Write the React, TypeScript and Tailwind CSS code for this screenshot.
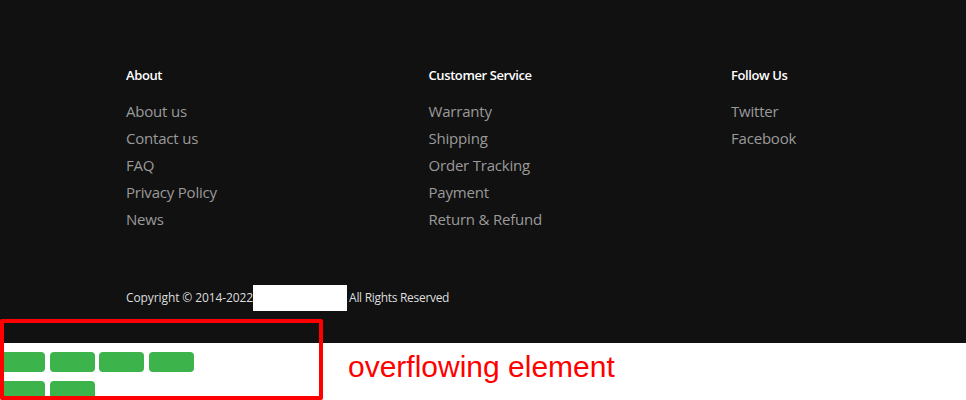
import React from "react";

const cols = [
  { title: "About", links: ["About us", "Contact us", "FAQ", "Privacy Policy", "News"] },
  { title: "Customer Service", links: ["Warranty", "Shipping", "Order Tracking", "Payment", "Return & Refund"] },
  { title: "Follow Us", links: ["Twitter", "Facebook"] },
];

export default function App() {
  return (
    <div className="relative w-[966px] h-[400px] overflow-hidden bg-white">
      <footer
        className="h-[343px] bg-[#111111] pl-[126px] pt-[65px]"
        style={{ fontFamily: '"Open Sans", "Noto Sans", sans-serif' }}
      >
        <div className="flex">
          {cols.map((c) => (
            <div key={c.title} className="w-[302.5px] shrink-0">
              <h4 className="text-[13px] leading-[20px] font-semibold tracking-[-0.4px] text-white">{c.title}</h4>
              <ul className="mt-[13px]">
                {c.links.map((l) => (
                  <li key={l} className="text-[15px] leading-[27px] tracking-[-0.2px] text-[#9a9a9a]">
                    {l}
                  </li>
                ))}
              </ul>
            </div>
          ))}
        </div>
        <div className="mt-[52px] flex items-center text-[12px] leading-[20px] text-[#dedede]">
          <span className="tracking-[-0.1px]">Copyright © 2014-2022</span>
          <span className="inline-block w-[94px] h-[26px] bg-white" />
          <span className="ml-[2px] tracking-[-0.3px]">All Rights Reserved</span>
        </div>
      </footer>
      <div className="flex">
        <div className="w-[348px] pt-[9px]">
          <div className="flex flex-wrap w-[220px] gap-x-[4.67px] gap-y-[9px]">
            {[0, 1, 2, 3, 4, 5].map((i) => (
              <div key={i} className="w-[45px] h-[20px] rounded-[4px] bg-[#3cb44b]" />
            ))}
          </div>
        </div>
        <div
          className="pt-[7px] text-[30px] leading-[34px] text-[#ff0000]"
          style={{ fontFamily: '"Liberation Sans", Arial, sans-serif' }}
        >
          overflowing element
        </div>
      </div>
      <div className="absolute left-0 top-[319px] w-[323px] h-[81px] border-[4px] border-[#ff0000] rounded-[2px]" />
    </div>
  );
}
